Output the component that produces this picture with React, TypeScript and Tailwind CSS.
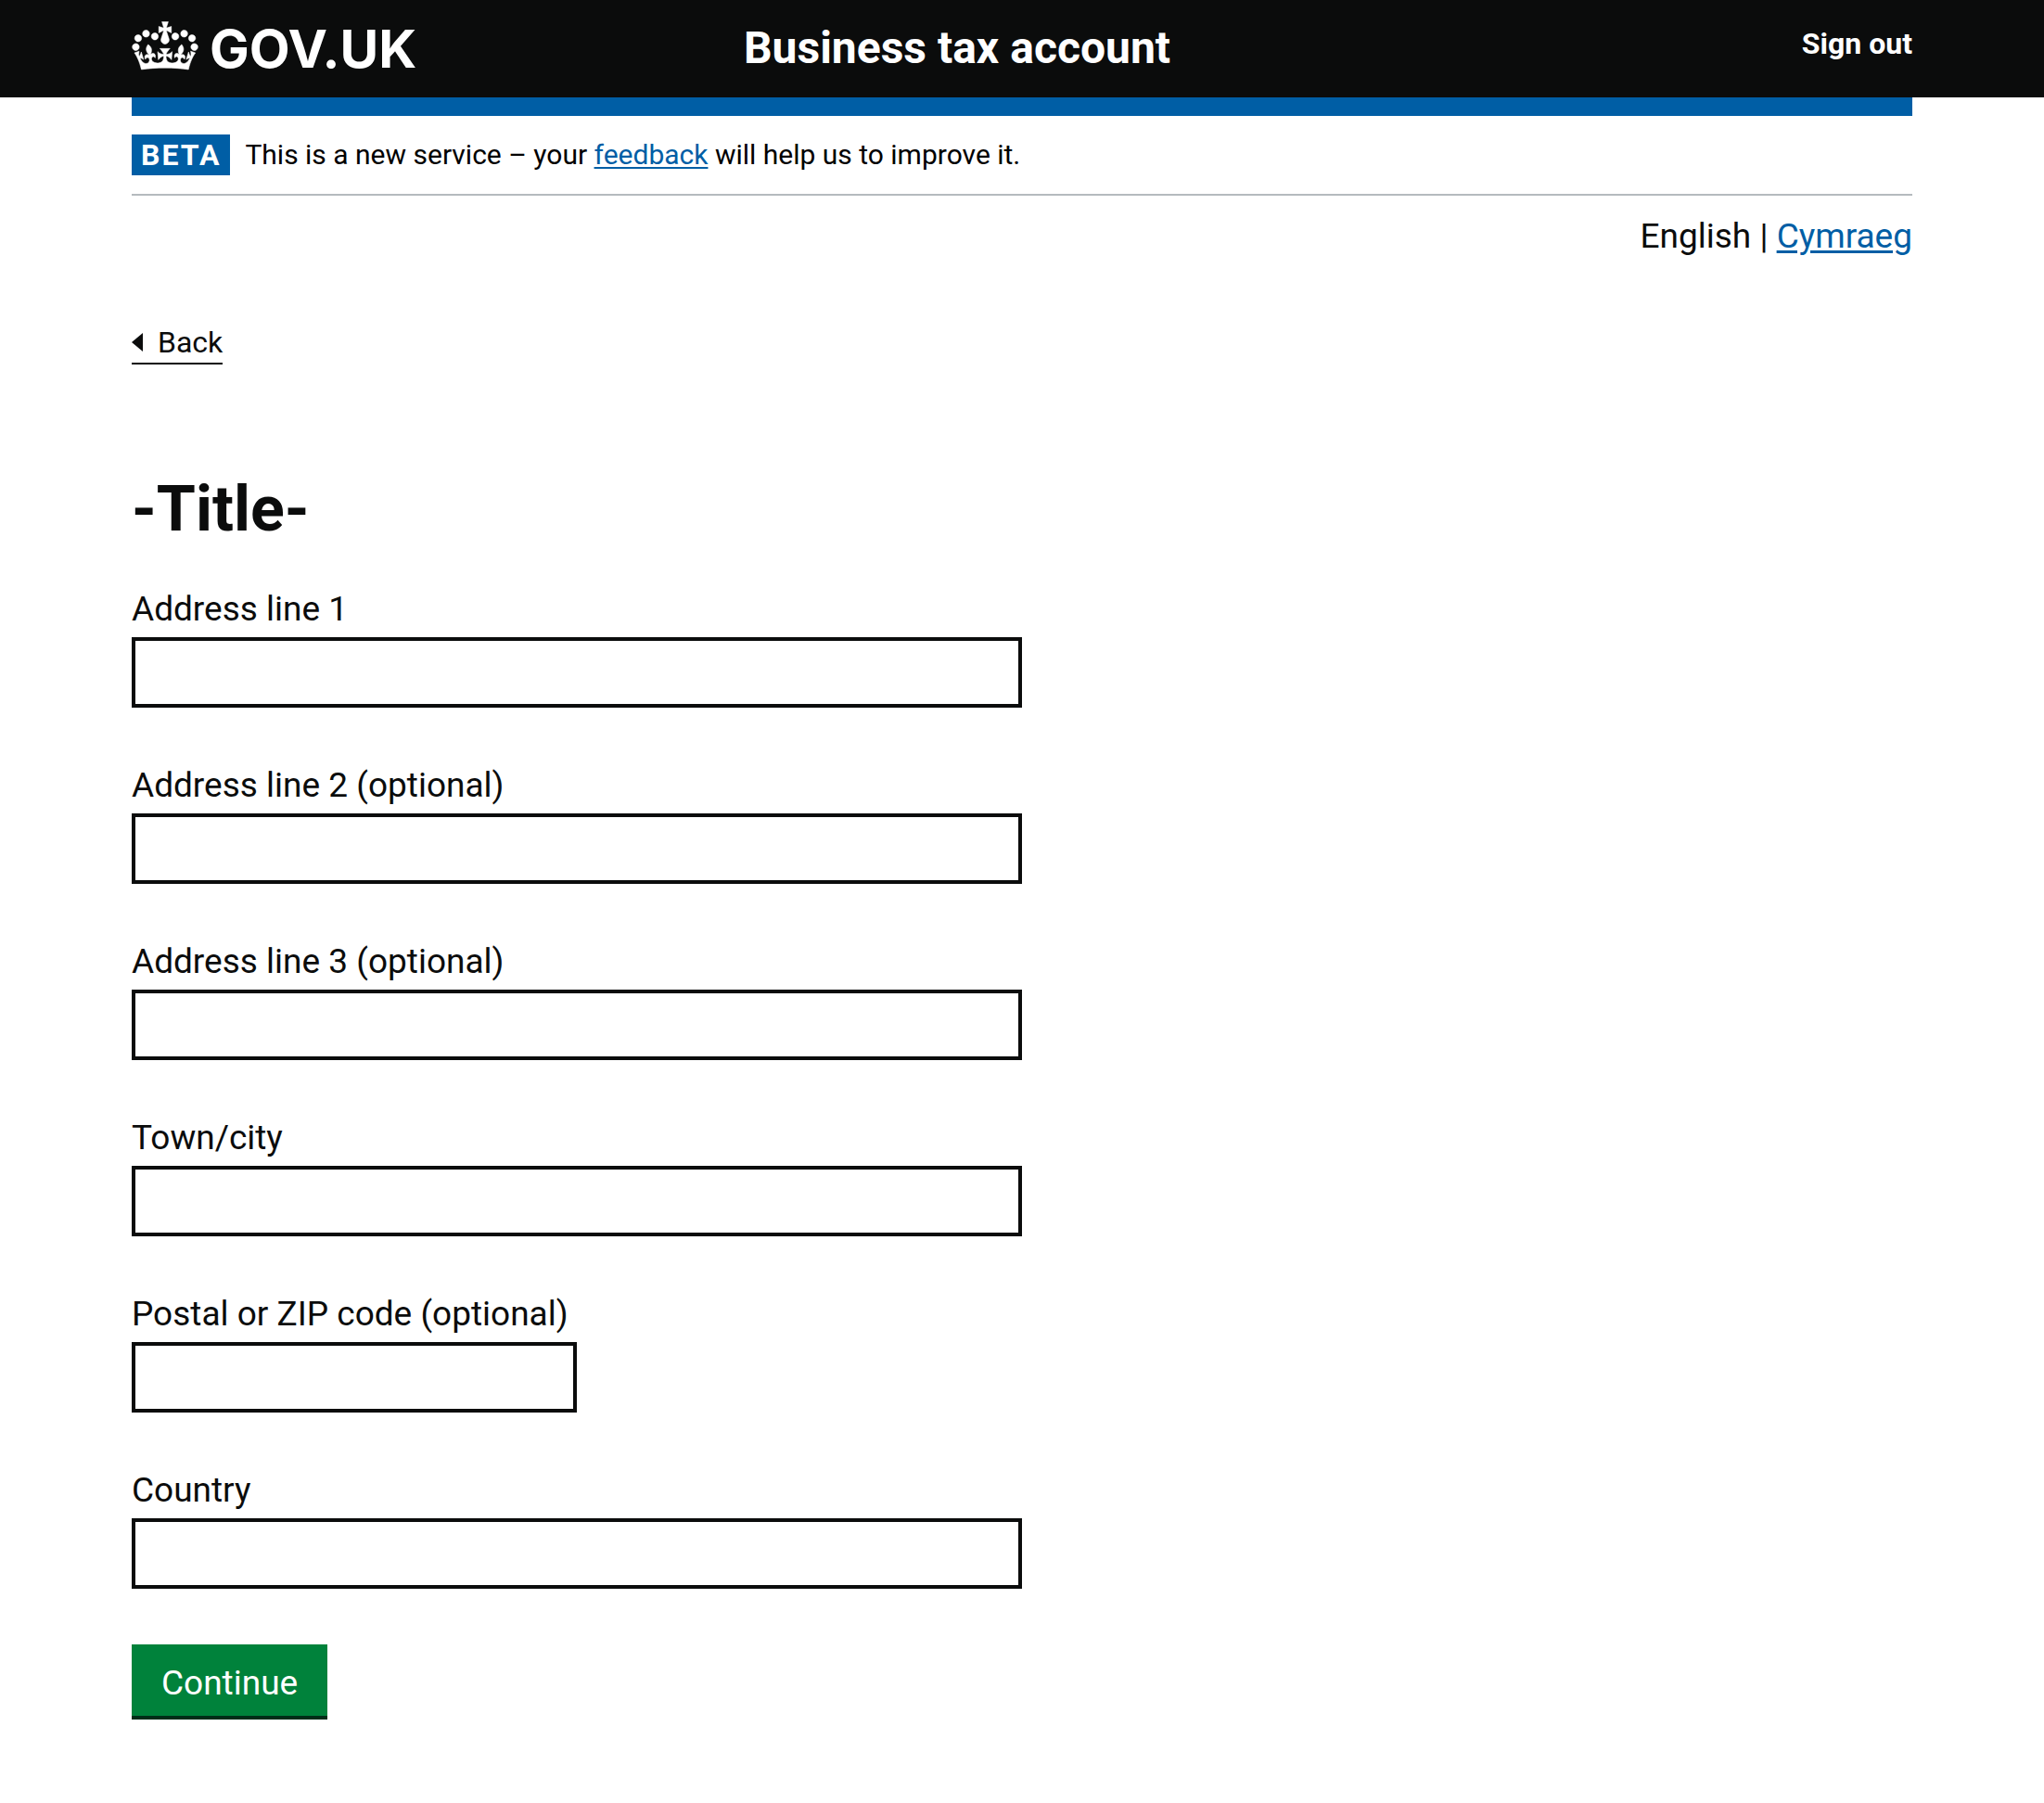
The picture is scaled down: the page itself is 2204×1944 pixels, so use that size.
const crownPath =
  'M25 30.2c3.5 1.5 7.7-.2 9.1-3.7 1.5-3.6-.2-7.8-3.9-9.2-3.6-1.4-7.6.3-9.1 3.9-1.4 3.5.3 7.5 3.9 9zM9 39.5c3.6 1.5 7.8-.2 9.2-3.7 1.5-3.6-.2-7.8-3.9-9.1-3.6-1.5-7.6.2-9.1 3.8-1.4 3.5.3 7.5 3.8 9zM4.4 57.2c3.5 1.5 7.7-.2 9.1-3.8 1.5-3.6-.2-7.7-3.9-9.1-3.5-1.5-7.6.3-9.1 3.8-1.4 3.5.3 7.6 3.9 9.1zm38.3-21.4c3.5 1.5 7.7-.2 9.1-3.8 1.5-3.6-.2-7.7-3.9-9.1-3.6-1.5-7.6.3-9.1 3.8-1.3 3.6.4 7.7 3.9 9.1zm64.4-5.6c-3.6 1.5-7.8-.2-9.1-3.7-1.5-3.6.2-7.8 3.8-9.2 3.6-1.4 7.7.3 9.2 3.9 1.3 3.5-.4 7.5-3.9 9zm15.9 9.3c-3.6 1.5-7.7-.2-9.1-3.7-1.5-3.6.2-7.8 3.7-9.1 3.6-1.5 7.7.2 9.2 3.8 1.5 3.5-.3 7.5-3.8 9zm4.7 17.7c-3.6 1.5-7.8-.2-9.2-3.8-1.5-3.6.2-7.7 3.9-9.1 3.6-1.5 7.7.3 9.2 3.8 1.3 3.5-.4 7.6-3.9 9.1zM89.3 35.8c-3.6 1.5-7.8-.2-9.2-3.8-1.4-3.6.2-7.7 3.9-9.1 3.6-1.5 7.7.3 9.2 3.8 1.4 3.6-.3 7.7-3.9 9.1zM69.7 17.7l8.9 4.7V9.3l-8.9 2.8c-.2-.3-.5-.6-.9-.9L72.4 0H59.6l3.5 11.2c-.3.3-.6.5-.9.9l-8.8-2.8v13.1l8.8-4.7c.3.3.6.7.9.9l-5 15.4v.1c-.2.8-.4 1.6-.4 2.4 0 4.1 3.1 7.5 7 8.1h.2c.3 0 .7.1 1 .1.4 0 .7 0 1-.1h.2c4-.6 7.1-4.1 7.1-8.1 0-.8-.1-1.7-.4-2.4V34l-5.1-15.4c.4-.2.7-.6 1-.9zM66 92.8c16.9 0 32.8 1.1 47.1 3.2 4-16.9 8.9-26.7 14-33.5l-9.6-3.4c1 4.9 1.1 7.2 0 10.2-1.5-1.4-3-4.3-4.2-8.7L108.6 76c2.8-2 5-3.2 7.5-3.3-4.4 9.4-10 11.9-13.6 11.2-4.3-.8-6.3-4.6-5.6-7.9 1-4.7 5.7-5.9 8-.5 4.3-8.7-3-11.4-7.6-8.8 7.1-7.2 7.9-13.5 2.1-21.1-8 6.1-8.1 12.3-4.5 20.8-4.7-5.4-12.1-2.5-9.5 6.2 3.4-5.2 7.9-2 7.2 3.1-.6 4.3-6.4 7.8-13.5 7.2-10.3-.9-10.9-8-11.2-13.8 2.5-.5 7.1 1.8 11 7.3L80.2 60c-4.1 4.4-8 5.3-12.3 5.4 1.4-4.4 8-11.6 8-11.6H55.5s6.4 7.2 7.9 11.6c-4.2-.1-8-1-12.3-5.4l1.4 16.4c3.9-5.5 8.5-7.7 10.9-7.3-.3 5.8-.9 12.8-11.1 13.8-7.2.6-12.9-2.9-13.5-7.2-.7-5 3.8-8.3 7.1-3.1 2.7-8.7-4.6-11.6-9.4-6.2 3.7-8.5 3.6-14.7-4.6-20.8-5.8 7.6-5 13.9 2.2 21.1-4.7-2.6-11.9.1-7.7 8.8 2.3-5.5 7.1-4.2 8.1.5.7 3.3-1.3 7.1-5.7 7.9-3.5.7-9-1.8-13.5-11.2 2.5.1 4.7 1.3 7.5 3.3l-4.7-15.4c-1.2 4.4-2.7 7.2-4.3 8.7-1.1-3-.9-5.3 0-10.2l-9.5 3.4c5 6.9 9.9 16.7 14 33.5 14.8-2.1 30.8-3.2 47.7-3.2z';

type Field = { id: string; label: string; short?: boolean };

const fields: Field[] = [
  { id: 'address-line-1', label: 'Address line 1' },
  { id: 'address-line-2', label: 'Address line 2 (optional)' },
  { id: 'address-line-3', label: 'Address line 3 (optional)' },
  { id: 'town', label: 'Town/city' },
  { id: 'postcode', label: 'Postal or ZIP code (optional)', short: true },
  { id: 'country', label: 'Country' },
];

function Header() {
  return (
    <header className="bg-[#0b0c0c] text-white">
      <div className="mx-auto flex h-[105px] max-w-[1920px] items-start font-bold">
        <div className="flex w-1/3 pt-[22px]">
          <a href="#home" className="flex items-start gap-3">
            <svg
              aria-hidden="true"
              viewBox="-1 -1 134 99"
              className="mt-px h-[53px] w-[72px] fill-current stroke-current"
            >
              <path fillRule="evenodd" strokeWidth="1" d={crownPath} />
            </svg>
            <span className="font-[Inter,sans-serif] text-[57px] leading-[62px]">GOV.UK</span>
          </a>
        </div>
        <a href="#account" className="ml-5 flex-1 pt-5 text-[48px] leading-[64px]">
          Business tax account
        </a>
        <a href="#sign-out" className="pt-[27px] text-[32px] leading-[40px]">
          Sign out
        </a>
      </div>
    </header>
  );
}

function PhaseBanner() {
  return (
    <div className="flex items-center gap-4 border-b-2 border-[#b5babe] py-5 text-[30px] leading-[44px] text-black">
      <strong className="bg-[#005ea5] px-[10px] text-[32px] tracking-[2px] text-white">BETA</strong>
      <span>
        This is a new service – your{' '}
        <a href="#feedback" className="text-[#005ea5] underline decoration-2 underline-offset-[3px]">
          feedback
        </a>{' '}
        will help us to improve it.
      </span>
    </div>
  );
}

function AddressForm() {
  return (
    <form className="flex w-1/2 flex-col items-start">
      {fields.map((field) => (
        <div key={field.id} className="mb-[60px] flex w-full flex-col gap-[6px]">
          <label htmlFor={field.id} className="leading-[48px]">
            {field.label}
          </label>
          <input
            id={field.id}
            name={field.id}
            type="text"
            className={
              field.short
                ? 'h-[76px] w-1/2 border-4 border-[#0b0c0c] px-2'
                : 'h-[76px] w-full border-4 border-[#0b0c0c] px-2'
            }
          />
        </div>
      ))}
      <button
        type="submit"
        className="border-b-4 border-[#002d18] bg-[#00823b] px-8 pt-[18px] pb-[11px] leading-[48px] text-white"
      >
        Continue
      </button>
    </form>
  );
}

export default function App() {
  return (
    <div className="min-h-screen bg-white font-[Roboto,sans-serif] text-[37px] text-[#0b0c0c]">
      <Header />
      <div className="mx-auto max-w-[1920px]">
        <div className="h-5 bg-[#005ea5]" />
        <PhaseBanner />
        <nav aria-label="Language" className="pt-5 text-right leading-[48px]">
          English |{' '}
          <a href="#cy" className="text-[#005ea5] underline decoration-[3px] underline-offset-[3px]">
            Cymraeg
          </a>
        </nav>
        <main className="flex flex-col items-start">
          <a
            href="#back"
            className="mt-[68px] flex items-center gap-4 border-b-2 border-[#0b0c0c] text-[32px] leading-[44px]"
          >
            <svg aria-hidden="true" viewBox="0 0 12 20" className="h-5 w-3 fill-current">
              <path d="M0 10 12 0v20z" />
            </svg>
            Back
          </a>
          <h1 className="mt-[106px] mb-[34px] text-[68px] leading-[100px] font-bold">-Title-</h1>
          <AddressForm />
        </main>
      </div>
    </div>
  );
}
